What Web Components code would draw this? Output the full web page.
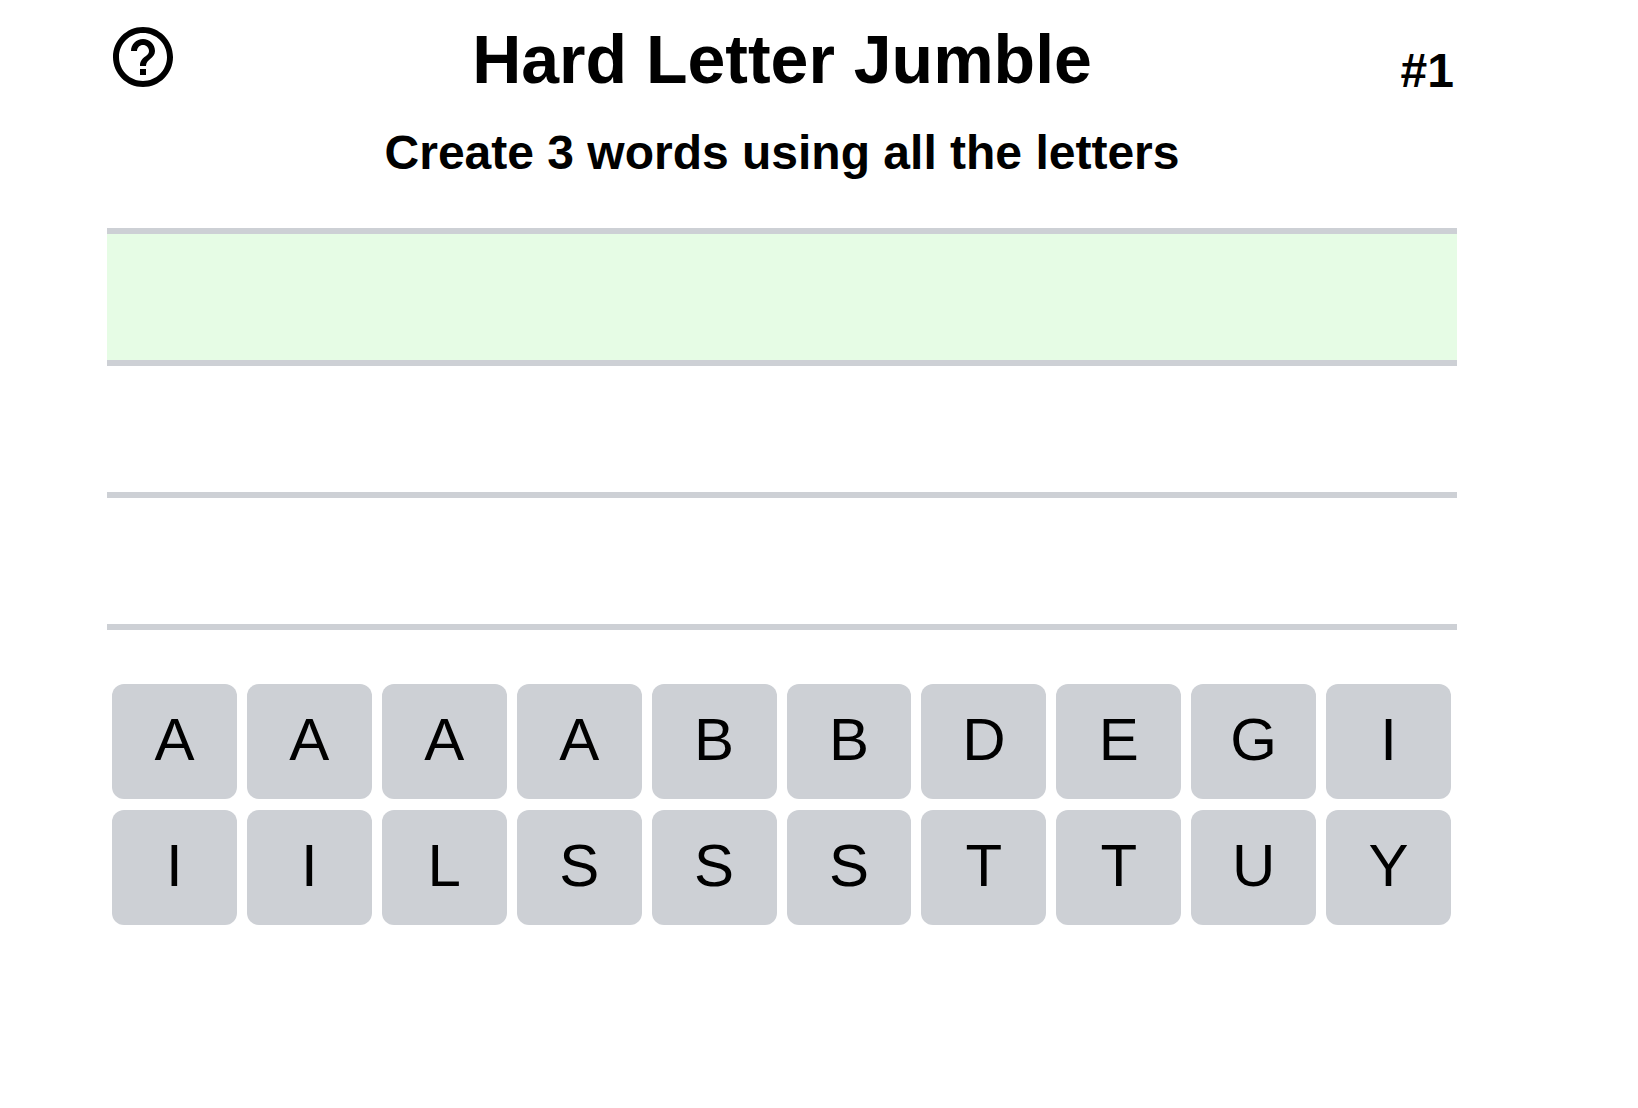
<!DOCTYPE html>
<html lang="en">
<head>
<meta charset="utf-8">
<meta name="viewport" content="width=device-width, initial-scale=1">
<title>Hard Letter Jumble</title>
<style>
  body {
    margin: 0;
    background: #fff;
    color: #000;
    font-family: "Helvetica Neue", Helvetica, "Liberation Sans", Arial, sans-serif;
  }
</style>
</head>
<body>
<jumble-game></jumble-game>

<script>
class JumbleElement extends HTMLElement {
  render(html) {
    this.attachShadow({ mode: "open" }).innerHTML =
      "<style>:host, * { box-sizing: border-box; }</style>" + html;
  }
}

class HelpButton extends JumbleElement {
  connectedCallback() {
    this.render(`
      <style>
        :host { display: block; width: 72px; height: 72px; }
        button { display: block; width: 100%; height: 100%; margin: 0; padding: 0; border: 0; background: none; color: inherit; cursor: pointer; }
        svg { display: block; width: 100%; height: 100%; fill: currentColor; }
      </style>
      <button type="button" aria-label="Help">
        <svg viewBox="0 0 24 24" aria-hidden="true"><path d="M11 18h2v-2h-2v2zm1-16C6.48 2 2 6.48 2 12s4.48 10 10 10 10-4.48 10-10S17.52 2 12 2zm0 18c-4.41 0-8-3.59-8-8s3.59-8 8-8 8 3.59 8 8-3.59 8-8 8zm0-14c-2.21 0-4 1.79-4 4h2c0-1.1.9-2 2-2s2 .9 2 2c0 2-3 1.75-3 5h2c0-2.25 3-2.5 3-5 0-2.21-1.79-4-4-4z"/></svg>
      </button>`);
  }
}

class GameHeader extends JumbleElement {
  connectedCallback() {
    this.render(`
      <style>
        :host { display: block; }
        header { display: grid; grid-template-columns: 1fr auto 1fr; align-items: start; }
        h1 { margin: 0; font-size: 68px; line-height: 76px; font-weight: 700; }
        h2 { margin: 27px 0 0; font-size: 48px; line-height: 58px; font-weight: 700; text-align: center; }
        .number { align-self: end; justify-self: end; padding-right: 3px; font-size: 48px; line-height: 52px; font-weight: 700; }
      </style>
      <header>
        <help-button></help-button>
        <h1><slot name="title"></slot></h1>
        <span class="number"><slot name="number"></slot></span>
      </header>
      <h2><slot name="goal"></slot></h2>`);
  }
}

class WordSlot extends JumbleElement {
  connectedCallback() {
    this.render(`
      <style>
        :host { display: block; height: 132px; border-bottom: 6px solid #cdd0d5; }
        :host([active]) { background: #e6fce5; }
        input { display: block; width: 100%; height: 100%; padding: 0 16px; border: 0; outline: 0; background: none; color: inherit; font: inherit; font-size: 60px; text-transform: uppercase; }
      </style>
      <input type="text" autocomplete="off" aria-label="${this.getAttribute("label")}">`);
  }
}

class WordBoard extends JumbleElement {
  connectedCallback() {
    this.render(`
      <style>
        :host { display: flex; flex-direction: column; border-top: 6px solid #cdd0d5; }
      </style>
      <slot></slot>`);
  }
}

class LetterTile extends JumbleElement {
  connectedCallback() {
    this.render(`
      <style>
        :host { display: block; }
        button { display: flex; align-items: center; justify-content: center; width: 100%; height: 115px; margin: 0; padding: 0 0 4px; border: 0; border-radius: 12px; background: #cdd0d5; color: inherit; font: inherit; font-size: 60px; line-height: 70px; cursor: pointer; }
      </style>
      <button type="button"><slot></slot></button>`);
  }
}

class LetterRack extends JumbleElement {
  connectedCallback() {
    const tiles = [...this.getAttribute("letters")]
      .map(letter => `<letter-tile>${letter}</letter-tile>`).join("");
    this.render(`
      <style>
        :host { display: grid; grid-template-columns: repeat(10, 1fr); gap: 11px 10px; padding: 0 6px 0 5px; }
      </style>
      ${tiles}`);
  }
}

class JumbleGame extends JumbleElement {
  connectedCallback() {
    this.render(`
      <style>
        :host { display: block; }
        main { padding: 21px 181px 48px 107px; }
        word-board { margin-top: 46px; }
        letter-rack { margin-top: 54px; }
        @media (max-width: 1000px) { main { padding-left: 16px; padding-right: 16px; } }
      </style>
      <main>
        <game-header>
          <span slot="title">Hard Letter Jumble</span>
          <span slot="number">#1</span>
          <span slot="goal">Create 3 words using all the letters</span>
        </game-header>
        <word-board>
          <word-slot label="First word" active></word-slot>
          <word-slot label="Second word"></word-slot>
          <word-slot label="Third word"></word-slot>
        </word-board>
        <letter-rack letters="AAAABBDEGIIILSSSTTUY"></letter-rack>
      </main>`);
  }
}

customElements.define("help-button", HelpButton);
customElements.define("game-header", GameHeader);
customElements.define("word-slot", WordSlot);
customElements.define("word-board", WordBoard);
customElements.define("letter-tile", LetterTile);
customElements.define("letter-rack", LetterRack);
customElements.define("jumble-game", JumbleGame);
</script>
</body>
</html>
